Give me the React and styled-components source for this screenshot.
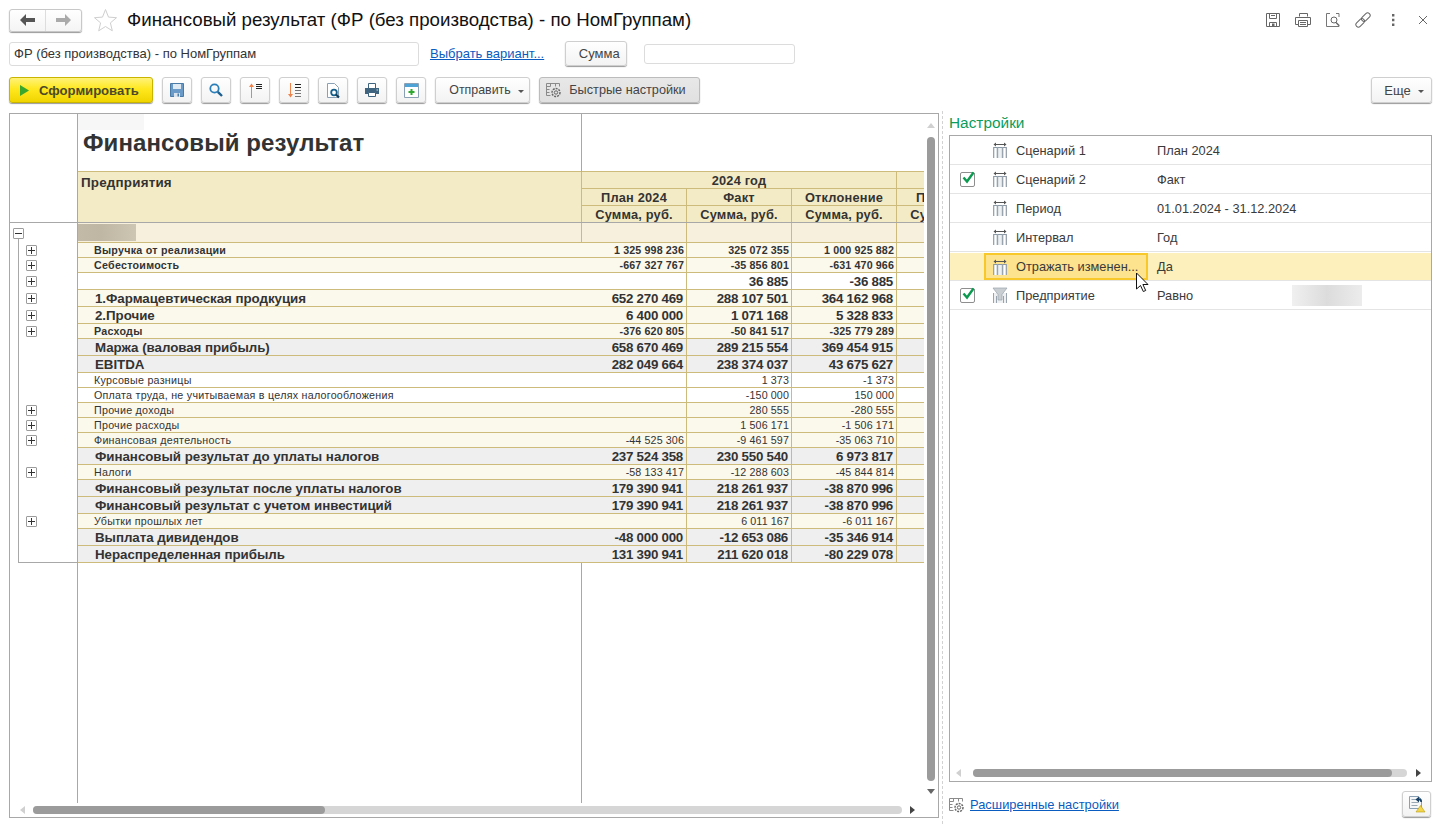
import styled, { createGlobalStyle } from "styled-components";

const GlobalStyle = createGlobalStyle`
  html, body {
    margin: 0;
    height: 826px;
    overflow: hidden;
    background: #fff;
    font-family: "Liberation Sans", Arial, sans-serif;
    color: #333;
  }
  * { box-sizing: border-box; }
`;

const Page = styled.div`
  width: 1443px;
  height: 826px;
  padding-top: 8px;
  position: relative;
`;

/* top bar */
const TopBar = styled.header`
  display: flex;
  align-items: center;
  height: 24px;
  padding-left: 9px;
  padding-right: 12px;
`;
const NavGroup = styled.div`
  display: flex;
  width: 73px;
  height: 23px;
  border: 1px solid #c8c8c8;
  border-radius: 3px;
  box-shadow: 0 1px 1px #999;
  background: linear-gradient(#fff, #f4f4f4);
`;
const NavBtn = styled.div`
  flex: 1;
  display: flex;
  align-items: center;
  justify-content: center;
  & + & { border-left: 1px solid #ddd; }
`;
const Star = styled.div`
  margin-left: 11px;
  width: 25px;
  height: 24px;
`;
const PageTitle = styled.h1`
  margin: 0 0 0 9px;
  font-size: 18.7px;
  font-weight: 400;
  color: #111;
  white-space: nowrap;
`;
const TopIcons = styled.div`
  margin-left: auto;
  display: flex;
  align-items: center;
  gap: 14px;
`;
const TopIcon = styled.div`
  width: 16px;
  height: 16px;
  display: flex;
`;

/* variant row */
const VariantRow = styled.div`
  display: flex;
  align-items: center;
  height: 25px;
  margin-top: 9px;
  padding-left: 9px;
`;
const TextField = styled.div`
  width: ${(p) => p.$w}px;
  height: ${(p) => p.$h}px;
  margin-left: ${(p) => p.$ml || 0}px;
  border: 1px solid #dcdcdc;
  border-radius: 3px;
  background: #fff;
  font-size: 13px;
  line-height: ${(p) => p.$h - 2}px;
  padding-left: 4px;
  color: #333;
`;
const Link = styled.a`
  color: #0b5cc0;
  text-decoration: underline;
  font-size: ${(p) => p.$size || 13}px;
  margin-left: ${(p) => p.$ml || 0}px;
  white-space: nowrap;
`;
const Button = styled.div`
  display: flex;
  align-items: center;
  justify-content: center;
  flex: none;
  gap: 7px;
  width: ${(p) => p.$w}px;
  height: ${(p) => p.$h || 26}px;
  margin-left: ${(p) => p.$ml || 0}px;
  padding-left: ${(p) => p.$pl || 0}px;
  padding-right: ${(p) => p.$pr || 0}px;
  border: 1px solid ${(p) => (p.$pressed ? "#bcbcbc" : "#cfcfcf")};
  border-radius: 3px;
  background: ${(p) =>
    p.$pressed ? "linear-gradient(#e8e8e8, #e0e0e0)" : "linear-gradient(#fff, #f3f3f3)"};
  box-shadow: 0 1px 1px #9a9a9a;
  font-size: ${(p) => p.$fs || 13}px;
  color: #444;
  white-space: nowrap;
`;
const Caret = styled.span`
  width: 0;
  height: 0;
  margin-top: 2px;
  border-left: 3px solid transparent;
  border-right: 3px solid transparent;
  border-top: 3px solid #555;
`;

/* toolbar */
const Toolbar = styled.div`
  display: flex;
  align-items: center;
  height: 26px;
  margin-top: 11px;
  padding-left: 9px;
  padding-right: 11px;
  gap: 9px;
`;
const GenerateBtn = styled.div`
  display: flex;
  align-items: center;
  gap: 10px;
  width: 144px;
  height: 26px;
  padding-left: 10px;
  border: 1px solid #c9b400;
  border-radius: 3px;
  background: linear-gradient(#fff27a, #ffe81f 45%, #f0d400);
  box-shadow: 0 1px 1px #9a9a9a;
  font-size: 13.1px;
  font-weight: 700;
  color: #4a4a2a;
`;
const ToolbarEnd = styled.div`
  margin-left: auto;
`;

/* main */
const Main = styled.main`
  display: flex;
  margin-top: 10px;
  padding-left: 9px;
`;
const ReportPanel = styled.section`
  width: 930px;
  height: 705px;
  flex: none;
  display: flex;
  flex-direction: column;
  border: 1px solid #a8a8a8;
`;
const ReportBody = styled.div`
  display: flex;
  height: 689px;
`;
const Viewport = styled.div`
  width: 914px;
  overflow: hidden;
  flex: none;
`;
const Row = styled.div`
  display: flex;
  height: ${(p) => p.$h}px;
  width: 1100px;
`;
const TreeCell = styled.div`
  position: relative;
  width: 68px;
  flex: none;
  border-right: 1px solid #a8a8a8;
  background: ${(p) =>
    p.$line
      ? "linear-gradient(#a8a8a8, #a8a8a8) 8px 0 / 1px 100% no-repeat"
      : "none"};
`;
const TreeBottom = styled.div`
  position: absolute;
  left: 8px;
  right: 0;
  bottom: 0;
  height: 1px;
  background: #a8a8a8;
`;
const TreeLineStub = styled.div`
  position: absolute;
  left: 8px;
  top: 16px;
  bottom: 0;
  width: 1px;
  background: #a8a8a8;
`;
const Toggle = styled.div`
  position: absolute;
  left: ${(p) => p.$x}px;
  top: ${(p) => p.$y}px;
  width: 11px;
  height: 11px;
  border: 1px solid #9c9c9c;
  border-radius: 1px;
  background: #fff;
  &::before {
    content: "";
    position: absolute;
    left: 1px;
    right: 1px;
    top: 4px;
    height: 1px;
    background: #333;
  }
  &::after {
    content: "";
    display: ${(p) => (p.$open ? "none" : "block")};
    position: absolute;
    top: 1px;
    bottom: 1px;
    left: 4px;
    width: 1px;
    background: #333;
  }
`;
const tones = {
  white: "#fff",
  light: "#fbf8ec",
  grey: "#efefef",
  group: "#f6f0dc",
  head: "#f3ebc5",
};
const LabelCell = styled.div`
  width: ${(p) => p.$w || 504}px;
  flex: none;
  display: flex;
  align-items: center;
  padding-left: ${(p) => p.$pad ?? (p.$big ? 17 : 16)}px;
  background: ${(p) => tones[p.$tone] || "#fff"};
  border-bottom: 1px solid #cdbb7c;
  font-size: ${(p) => (p.$big ? 13.33 : 10.7)}px;
  font-weight: ${(p) => (p.$bold ? 700 : 400)};
  white-space: nowrap;
  letter-spacing: ${(p) => (p.$big ? -0.04 : 0.26)}px;
`;
const NumCell = styled.div`
  width: ${(p) => p.$w || 105}px;
  flex: none;
  display: flex;
  align-items: center;
  justify-content: flex-end;
  padding-right: ${(p) => (p.$big ? 3 : 2)}px;
  background: ${(p) => tones[p.$tone] || "#fff"};
  border-bottom: 1px solid #cdbb7c;
  border-right: 1px solid #cdbb7c;
  border-left: ${(p) => (p.$first ? "1px solid #cdbb7c" : "none")};
  font-size: ${(p) => (p.$big ? 13.33 : 10.7)}px;
  font-weight: ${(p) => (p.$bold ? 700 : 400)};
  letter-spacing: ${(p) => (p.$big ? -0.25 : 0.12)}px;
  white-space: nowrap;
`;
const BlurBox = styled.div`
  width: 58px;
  height: 17px;
  background: linear-gradient(90deg, #c2baa6, #bfb7a3 40%, #cdc6b3);
`;
const TitleCell = styled.div`
  position: relative;
  width: 504px;
  flex: none;
  padding-left: 5px;
  padding-top: 15px;
  border-bottom: 1px solid #cdbb7c;
  border-right: 1px solid #a8a8a8;
  font-size: 24px;
  font-weight: 700;
  letter-spacing: 0.1px;
  white-space: nowrap;
  &::before {
    content: "";
    position: absolute;
    left: 0;
    top: 0;
    width: 66px;
    height: 16px;
    background: #f7f7f7;
  }
`;
const TitleRest = styled.div`
  width: 400px;
  border-bottom: 1px solid #cdbb7c;
`;
const HeaderRow = styled.div`
  display: flex;
  height: 51px;
  width: 1100px;
  border-bottom: 1px solid #a8a8a8;
`;
const HeaderLabel = styled.div`
  width: 503px;
  flex: none;
  padding: 3px 0 0 3px;
  background: ${tones.head};
  font-size: 13.4px;
  font-weight: 700;
  letter-spacing: 0.2px;
`;
const HeaderGroup = styled.div`
  width: ${(p) => p.$w}px;
  flex: none;
  display: flex;
  flex-direction: column;
`;
const HeadLine = styled.div`
  display: flex;
  height: ${(p) => p.$h}px;
`;
const HeadCell = styled.div`
  width: ${(p) => p.$w || 105}px;
  flex: none;
  display: flex;
  align-items: center;
  justify-content: center;
  background: ${tones.head};
  border-right: 1px solid #cdbb7c;
  border-left: ${(p) => (p.$first ? "1px solid #cdbb7c" : "none")};
  border-bottom: ${(p) => (p.$last ? "none" : "1px solid #cdbb7c")};
  font-size: 12.8px;
  font-weight: 700;
  letter-spacing: 0.2px;
  white-space: nowrap;
`;
const EmptyLabel = styled.div`
  width: 504px;
  flex: none;
  border-right: 1px solid #a8a8a8;
`;
const VScroll = styled.div`
  flex: none;
  width: 12px;
  margin-left: 1px;
  display: flex;
  flex-direction: column;
  align-items: center;
  padding-top: 9px;
`;
const VThumb = styled.div`
  width: 8px;
  height: 644px;
  margin-top: 9px;
  margin-bottom: 8px;
  border-radius: 4px;
  background: #9b9b9b;
`;
const Arrow = styled.span`
  width: 0;
  height: 0;
  flex: none;
  ${(p) =>
    p.$dir === "up" &&
    `border-left:4px solid transparent;border-right:4px solid transparent;border-bottom:5px solid ${p.$c};`}
  ${(p) =>
    p.$dir === "down" &&
    `border-left:4px solid transparent;border-right:4px solid transparent;border-top:5px solid ${p.$c};`}
  ${(p) =>
    p.$dir === "left" &&
    `border-top:4px solid transparent;border-bottom:4px solid transparent;border-right:5px solid ${p.$c};`}
  ${(p) =>
    p.$dir === "right" &&
    `border-top:4px solid transparent;border-bottom:4px solid transparent;border-left:5px solid ${p.$c};`}
`;
const HScroll = styled.div`
  display: flex;
  align-items: center;
  height: ${(p) => p.$h || 14}px;
  padding-left: ${(p) => p.$pl}px;
  padding-right: ${(p) => p.$pr}px;
`;
const HTrack = styled.div`
  flex: 1;
  height: 8px;
  margin-left: ${(p) => p.$ml}px;
  margin-right: ${(p) => p.$mr}px;
  border-radius: 4px;
  background: #d6d6d6;
`;
const HThumb = styled.div`
  height: 8px;
  width: ${(p) => p.$w}px;
  border-radius: 4px;
  background: #9b9b9b;
`;

const Divider = styled.div`
  width: 1px;
  height: 713px;
  flex: none;
  margin-left: 3px;
  margin-top: -2px;
  border-left: 1px dashed #d2d2d2;
`;

/* settings */
const SettingsPanel = styled.aside`
  width: 483px;
  margin-left: 6px;
  flex: none;
  margin-top: -1px;
  display: flex;
  flex-direction: column;
`;
const SettingsTitle = styled.div`
  height: 23px;
  padding-top: 1px;
  font-size: 15.4px;
  line-height: 19px;
  color: #0a9d5c;
`;
const SettingsBox = styled.div`
  height: 647px;
  border: 1px solid #a8a8a8;
  width: 483px;
  display: flex;
  flex-direction: column;
`;
const SettingsRows = styled.div`
  flex: 1;
`;
const SRow = styled.div`
  display: flex;
  align-items: center;
  height: 29px;
  border-bottom: 1px solid #e4e4e4;
  font-size: 12.8px;
  color: #3a3a3a;
  background: ${(p) => (p.$active ? "linear-gradient(#fff 0, #fff 1px, #fdf0bc 1px)" : "none")};
`;
const CheckCell = styled.div`
  width: 34px;
  flex: none;
  padding-left: 10px;
  display: flex;
`;
const CheckBox = styled.div`
  width: 15px;
  height: 15px;
  border: 1px solid #8e8e8e;
  border-radius: 2px;
  background: #fff;
  position: relative;
`;
const CheckMark = styled.svg`
  position: absolute;
  left: 0;
  top: -3px;
`;
const NameCell = styled.div`
  width: 164px;
  height: 27px;
  flex: none;
  display: flex;
  align-items: center;
  gap: 8px;
  padding-left: 6px;
  white-space: nowrap;
  border: 2px solid ${(p) => (p.$active ? "#f8c82a" : "transparent")};
  background: ${(p) => (p.$active ? "#fde38e" : "none")};
  margin-top: ${(p) => (p.$active ? 1 : 0)}px;
`;
const ValueCell = styled.div`
  margin-left: 9px;
  width: 135px;
  flex: none;
  white-space: nowrap;
`;
const SettingBlur = styled.div`
  width: 70px;
  height: 21px;
  flex: none;
  background: linear-gradient(90deg, #f0f0f0, #dcdcdc 50%, #ececec);
`;
const FooterRow = styled.div`
  display: flex;
  align-items: center;
  height: 30px;
  margin-top: 7px;
`;
const FooterIcon = styled.div`
  width: 16px;
  height: 16px;
  margin-right: 5px;
  margin-top: 2px;
`;
const FooterEnd = styled.div`
  margin-left: auto;
  margin-right: 1px;
`;
const Cursor = styled.svg`
  position: absolute;
  left: 1135px;
  top: 272px;
`;

/* icons */
const BackIcon = ({ c }) => (
  <svg width="15" height="12" viewBox="0 0 15 12">
    <path d="M6 0 0 6l6 6V8h9V4H6z" fill={c} />
  </svg>
);
const ForwardIcon = ({ c }) => (
  <svg width="15" height="12" viewBox="0 0 15 12">
    <path d="M9 0l6 6-6 6V8H0V4h9z" fill={c} />
  </svg>
);
const StarIcon = () => (
  <svg width="25" height="24" viewBox="0 0 25 24">
    <path
      d="M12.5 1.5l3 7.6 8 .6-6.1 5.2 1.9 7.9-6.8-4.3-6.8 4.3 1.9-7.9L1.5 9.7l8-.6z"
      fill="#fff"
      stroke="#cfcfcf"
    />
  </svg>
);
const SaveIcon = () => (
  <svg width="16" height="16" viewBox="0 0 16 16">
    <path d="M1.5 1.5h13v13h-13z" fill="#6a9bc8" stroke="#4a7aa6" />
    <path d="M4 2h8v5H4z" fill="#dfe9f2" />
    <path d="M5 11h6v4H5z" fill="#d8e3ee" />
    <path d="M8.5 11.5h1.5v3H8.5z" fill="#4a7aa6" />
  </svg>
);
const SearchIcon = () => (
  <svg width="16" height="16" viewBox="0 0 16 16" fill="none">
    <circle cx="6.5" cy="6.5" r="4.2" stroke="#2b7fb8" strokeWidth="1.8" />
    <path d="M9.8 9.8 14 14" stroke="#1d5f8f" strokeWidth="2.4" />
  </svg>
);
const SortUpIcon = () => (
  <svg width="17" height="17" viewBox="0 0 17 17" fill="none">
    <path d="M4.5 16V3" stroke="#f0824a" />
    <path d="M2 5 4.500 1.500 7 5z" fill="#f0824a" />
    <path d="M9 2.500h6M9 4.500h6M9 6.500h6" stroke="#222" />
  </svg>
);
const SortDownIcon = () => (
  <svg width="17" height="17" viewBox="0 0 17 17" fill="none">
    <path d="M4.500 1v13" stroke="#f0824a" />
    <path d="M2 12 4.500 15.500 7 12z" fill="#f0824a" />
    <path d="M9 2.500h6M9 5.500h6" stroke="#222" />
    <path d="M9 8.500h6M9 11.500h6M9 14.500h6" stroke="#777" />
  </svg>
);
const PreviewIcon = () => (
  <svg width="17" height="17" viewBox="0 0 17 17" fill="none">
    <path d="M2.5 1.5h7l4 4v10h-11z" fill="#fff" stroke="#8aa0b5" />
    <circle cx="9" cy="10.5" r="2.8" stroke="#155f8c" strokeWidth="1.8" />
    <path d="M11 12.5l3 3" stroke="#123f5e" strokeWidth="2.2" />
  </svg>
);
const PrintIcon = () => (
  <svg width="16" height="16" viewBox="0 0 16 16">
    <path d="M4.500 1.500h7v5h-7z" fill="#fff" stroke="#3f6480" />
    <path d="M1 6h14v6H1z" fill="#3f6480" />
    <path d="M4.500 10.500h7v4h-7z" fill="#fff" stroke="#3f6480" />
    <path d="M12.5 7.5h1.5v1h-1.5z" fill="#cfe0ec" />
  </svg>
);
const NewWindowIcon = () => (
  <svg width="15" height="15" viewBox="0 0 15 15">
    <path d="M.5.5h14v14H.5z" fill="#fff" stroke="#8aa0b5" />
    <path d="M1 1h13v3H1z" fill="#4da3d6" />
    <path d="M6.5 6H8.5V8H10.5V10H8.5V12H6.5V10H4.5V8H6.5z" fill="#2fa82f" />
  </svg>
);
const GearGridIcon = () => (
  <svg width="16" height="16" viewBox="0 0 16 16" fill="none">
    <path d="M.5 1.500h13M.5 4.500h4M.5 7.500h3M.5 10.500h3M.5 13.500h4M.5 1.500v12M4.500 1.500v3M9.500 1.500v3M13.500 1.500v3" stroke="#8a8a8a" />
    <circle cx="10" cy="10.5" r="4" stroke="#666" strokeWidth="1.4" strokeDasharray="2 1" />
    <circle cx="10" cy="10.5" r="1.7" stroke="#666" />
  </svg>
);
const PlayIcon = () => (
  <svg width="9" height="11" viewBox="0 0 9 11">
    <path d="M0 0l9 5.5L0 11z" fill="#3aa62c" />
  </svg>
);
const ColumnIcon = () => (
  <svg width="16" height="16" viewBox="0 0 16 16" fill="none">
    <path d="M3 2.500h10" stroke="#555" />
    <path d="M4 .5 1.500 2.500 4 4.500zM12 .5l2.500 2 -2.500 2z" fill="#555" />
    <path d="M1 6a1 1 0 0 1 1-1h12a1 1 0 0 1 1 1v10H1z" fill="#dde2e6" />
    <path d="M1 5.500h14" stroke="#8b98a5" />
    <path d="M1.500 5v11M14.500 5v11M5.500 5v11M10.500 5v11" stroke="#98a3ae" />
    <path d="M3.500 6v10M8 6v10M12.500 6v10" stroke="#fff" />
  </svg>
);
const FilterIcon = () => (
  <svg width="16" height="16" viewBox="0 0 16 16" fill="none">
    <path d="M1 6h14v10H1z" fill="#eef0f2" />
    <path d="M1.500 6v10M14.500 6v10M4.500 9v7M11.500 9v7" stroke="#98a3ae" />
    <path d="M1 1h14L10 7.500V13H6V7.500z" fill="#c9ced3" stroke="#98a3ae" strokeWidth=".7" />
  </svg>
);
const FloppyOutline = () => (
  <svg width="16" height="16" viewBox="0 0 16 16" fill="none">
    <path d="M1.500 1.500h13v13h-13z" stroke="#666" />
    <path d="M4.500 1.500v5h7v-5M6 3.500h4" stroke="#666" />
    <path d="M4.500 14.500v-4h7v4" stroke="#666" />
    <path d="M7 11.500h2.500v3H7z" fill="#666" />
  </svg>
);
const PrinterOutline = () => (
  <svg width="16" height="16" viewBox="0 0 16 16" fill="none">
    <path d="M4.500 4.500v-3h8v3M.5 5.500h15v7h-3M3.500 12.500h-3v-7" stroke="#666" />
    <path d="M3.500 8.500h9v6h-9zM5 10.500h6M5 12.500h6" stroke="#666" />
  </svg>
);
const PreviewOutline = () => (
  <svg width="16" height="16" viewBox="0 0 16 16" fill="none">
    <path d="M5 1.500H1.500v13H14V13M14 5V1.500h-3" stroke="#777" />
    <circle cx="9" cy="8" r="3" stroke="#666" />
    <path d="M11 10.500l3 3" stroke="#666" strokeWidth="1.4" />
  </svg>
);
const LinkOutline = () => (
  <svg width="16" height="16" viewBox="0 0 16 16" fill="none" stroke="#666">
    <g transform="rotate(-45 8 8)">
      <rect x="-1" y="5.500" width="10" height="5" rx="2.500" />
      <rect x="7" y="5.500" width="10" height="5" rx="2.500" />
    </g>
  </svg>
);
const DotsIcon = () => (
  <svg width="16" height="16" viewBox="0 0 16 16">
    <path d="M7 2h2.400v2.400H7zM7 6.800h2.400v2.400H7zM7 11.600h2.400V14H7z" fill="#666" />
  </svg>
);
const CloseIcon = () => (
  <svg width="16" height="16" viewBox="0 0 16 16" fill="none">
    <path d="M4 4l8 8M12 4l-8 8" stroke="#666" />
  </svg>
);
const RestoreIcon = () => (
  <svg width="18" height="18" viewBox="0 0 18 18" fill="none">
    <path d="M1.500 1.500h9l3 3v9h-12z" fill="#f4f6f8" stroke="#8aa0b5" />
    <path d="M3.500 4.500h5M3.500 7.500h7M3.500 10.500h6" stroke="#9aa8b5" />
    <path d="M14 7c0-2.200-1-3.600-3-3.800V1.500L7.500 4.500 11 7.500V5.300c.9.200 1.400.9 1.400 1.700z" fill="#153f66" />
    <path d="M12.500 10.500 8 17h9z" fill="#f5d64a" stroke="#b79a18" strokeWidth=".6" />
  </svg>
);

const bigRow = 17;
const smallRow = 15;

const rows = [
  { h: smallRow, tone: "light", bold: true, box: true, label: "Выручка от реализации", v: ["1 325 998 236", "325 072 355", "1 000 925 882"] },
  { h: smallRow, tone: "light", bold: true, box: true, label: "Себестоимость", v: ["-667 327 767", "-35 856 801", "-631 470 966"] },
  { h: bigRow, tone: "white", box: true, numBig: true, numBold: true, label: "", v: ["", "36 885", "-36 885"] },
  { h: bigRow, tone: "light", big: true, bold: true, box: true, label: "1.Фармацевтическая продкуция", v: ["652 270 469", "288 107 501", "364 162 968"] },
  { h: bigRow, tone: "light", big: true, bold: true, box: true, label: "2.Прочие", v: ["6 400 000", "1 071 168", "5 328 833"] },
  { h: smallRow, tone: "light", bold: true, box: true, label: "Расходы", v: ["-376 620 805", "-50 841 517", "-325 779 289"] },
  { h: bigRow, tone: "grey", big: true, bold: true, label: "Маржа (валовая прибыль)", v: ["658 670 469", "289 215 554", "369 454 915"] },
  { h: bigRow, tone: "grey", big: true, bold: true, label: "EBITDA", v: ["282 049 664", "238 374 037", "43 675 627"] },
  { h: smallRow, tone: "white", label: "Курсовые разницы", v: ["", "1 373", "-1 373"] },
  { h: smallRow, tone: "white", label: "Оплата труда, не учитываемая в целях налогообложения", v: ["", "-150 000", "150 000"] },
  { h: smallRow, tone: "light", box: true, label: "Прочие доходы", v: ["", "280 555", "-280 555"] },
  { h: smallRow, tone: "light", box: true, label: "Прочие расходы", v: ["", "1 506 171", "-1 506 171"] },
  { h: smallRow, tone: "light", box: true, label: "Финансовая деятельность", v: ["-44 525 306", "-9 461 597", "-35 063 710"] },
  { h: bigRow, tone: "grey", big: true, bold: true, label: "Финансовый результат до уплаты налогов", v: ["237 524 358", "230 550 540", "6 973 817"] },
  { h: smallRow, tone: "light", box: true, label: "Налоги", v: ["-58 133 417", "-12 288 603", "-45 844 814"] },
  { h: bigRow, tone: "grey", big: true, bold: true, label: "Финансовый результат после уплаты налогов", v: ["179 390 941", "218 261 937", "-38 870 996"] },
  { h: bigRow, tone: "grey", big: true, bold: true, label: "Финансовый результат с учетом инвестиций", v: ["179 390 941", "218 261 937", "-38 870 996"] },
  { h: smallRow, tone: "light", box: true, label: "Убытки прошлых лет", v: ["", "6 011 167", "-6 011 167"] },
  { h: bigRow, tone: "grey", big: true, bold: true, label: "Выплата дивидендов", v: ["-48 000 000", "-12 653 086", "-35 346 914"] },
  { h: bigRow, tone: "grey", big: true, bold: true, label: "Нераспределенная прибыль", v: ["131 390 941", "211 620 018", "-80 229 078"] },
];

const settings = [
  { name: "Сценарий 1", value: "План 2024" },
  { name: "Сценарий 2", value: "Факт", checked: true },
  { name: "Период", value: "01.01.2024 - 31.12.2024" },
  { name: "Интервал", value: "Год" },
  { name: "Отражать изменен...", value: "Да", active: true },
  { name: "Предприятие", value: "Равно", checked: true, filter: true, blur: true },
];

const ReportRow = ({ row, last }) => (
  <Row $h={row.h}>
    <TreeCell $line>
      {row.box && <Toggle $x={16} $y={Math.floor((row.h - 11) / 2)} />}
      {last && <TreeBottom />}
    </TreeCell>
    <LabelCell $tone={row.tone} $big={row.big} $bold={row.bold}>
      {row.label}
    </LabelCell>
    {row.v.map((value, i) => (
      <NumCell
        key={i}
        $tone={row.tone}
        $big={row.big || row.numBig}
        $bold={row.bold || row.numBold}
      >
        {value}
      </NumCell>
    ))}
    <NumCell $tone={row.tone} />
  </Row>
);

const App = () => {
  return (
    <Page>
      <GlobalStyle />
      <TopBar>
        <NavGroup>
          <NavBtn>
            <BackIcon c="#555" />
          </NavBtn>
          <NavBtn>
            <ForwardIcon c="#aaa" />
          </NavBtn>
        </NavGroup>
        <Star>
          <StarIcon />
        </Star>
        <PageTitle>Финансовый результат (ФР (без производства) - по НомГруппам)</PageTitle>
        <TopIcons>
          <TopIcon><FloppyOutline /></TopIcon>
          <TopIcon><PrinterOutline /></TopIcon>
          <TopIcon><PreviewOutline /></TopIcon>
          <TopIcon><LinkOutline /></TopIcon>
          <TopIcon><DotsIcon /></TopIcon>
          <TopIcon><CloseIcon /></TopIcon>
        </TopIcons>
      </TopBar>

      <VariantRow>
        <TextField $w={410} $h={24}>ФР (без производства) - по НомГруппам</TextField>
        <Link href="#" $ml={11}>Выбрать вариант...</Link>
        <Button $w={62} $h={25} $ml={21} $pl={6}>Сумма</Button>
        <TextField $w={151} $h={20} $ml={17} />
      </VariantRow>

      <Toolbar>
        <GenerateBtn>
          <PlayIcon />
          Сформировать
        </GenerateBtn>
        <Button $w={30}><SaveIcon /></Button>
        <Button $w={30}><SearchIcon /></Button>
        <Button $w={30}><SortUpIcon /></Button>
        <Button $w={30}><SortDownIcon /></Button>
        <Button $w={30}><PreviewIcon /></Button>
        <Button $w={30}><PrintIcon /></Button>
        <Button $w={30}><NewWindowIcon /></Button>
        <Button $w={95} $fs={12.4} $pl={8}>Отправить <Caret /></Button>
        <Button $w={161} $fs={12.7} $pr={7} $pressed><GearGridIcon />Быстрые настройки</Button>
        <ToolbarEnd>
          <Button $w={61} $pl={5}>Еще <Caret /></Button>
        </ToolbarEnd>
      </Toolbar>

      <Main>
        <ReportPanel>
          <ReportBody>
            <Viewport>
              <Row $h={58}>
                <TreeCell />
                <TitleCell>Финансовый результат</TitleCell>
                <TitleRest />
              </Row>
              <HeaderRow>
                <TreeCell />
                <HeaderLabel>Предприятия</HeaderLabel>
                <HeaderGroup $w={316}>
                  <HeadLine $h={17}><HeadCell $w={316} $first>2024 год</HeadCell></HeadLine>
                  <HeadLine $h={17}>
                    <HeadCell $w={106} $first>План 2024</HeadCell>
                    <HeadCell>Факт</HeadCell>
                    <HeadCell>Отклонение</HeadCell>
                  </HeadLine>
                  <HeadLine $h={16}>
                    <HeadCell $w={106} $first $last>Сумма, руб.</HeadCell>
                    <HeadCell $last>Сумма, руб.</HeadCell>
                    <HeadCell $last>Сумма, руб.</HeadCell>
                  </HeadLine>
                </HeaderGroup>
                <HeaderGroup $w={315}>
                  <HeadLine $h={17}><HeadCell $w={315}> </HeadCell></HeadLine>
                  <HeadLine $h={17}><HeadCell>План 2024</HeadCell></HeadLine>
                  <HeadLine $h={16}><HeadCell $last>Сумма, руб.</HeadCell></HeadLine>
                </HeaderGroup>
              </HeaderRow>
              <Row $h={20}>
                <TreeCell>
                  <Toggle $x={3} $y={5} $open />
                  <TreeLineStub />
                </TreeCell>
                <LabelCell $w={503} $tone="group" $pad={0}><BlurBox /></LabelCell>
                <NumCell $w={106} $tone="group" $first />
                <NumCell $tone="group" />
                <NumCell $tone="group" />
                <NumCell $tone="group" />
              </Row>
              {rows.map((row, i) => (
                <ReportRow key={i} row={row} last={i === rows.length - 1} />
              ))}
              <Row $h={240}>
                <TreeCell />
                <EmptyLabel />
              </Row>
            </Viewport>
            <VScroll>
              <Arrow $dir="up" $c="#d0d0d0" />
              <VThumb />
              <Arrow $dir="down" $c="#666" />
            </VScroll>
          </ReportBody>
          <HScroll $pl={10} $pr={23} $h={14}>
            <Arrow $dir="left" $c="#d0d0d0" />
            <HTrack $ml={8} $mr={8}>
              <HThumb $w={292} />
            </HTrack>
            <Arrow $dir="right" $c="#444" />
          </HScroll>
        </ReportPanel>

        <Divider />

        <SettingsPanel>
          <SettingsTitle>Настройки</SettingsTitle>
          <SettingsBox>
            <SettingsRows>
              {settings.map((s) => (
                <SRow key={s.name} $active={s.active}>
                  <CheckCell>
                    {s.checked && (
                      <CheckBox>
                        <CheckMark width="15" height="15" viewBox="0 0 15 15" fill="none">
                          <path d="M2.500 7.500 6 11.500 12.500 2.500" stroke="#0b9a4f" strokeWidth="2.400" />
                        </CheckMark>
                      </CheckBox>
                    )}
                  </CheckCell>
                  <NameCell $active={s.active}>
                    {s.filter ? <FilterIcon /> : <ColumnIcon />}
                    {s.name}
                  </NameCell>
                  <ValueCell>{s.value}</ValueCell>
                  {s.blur && <SettingBlur />}
                </SRow>
              ))}
            </SettingsRows>
            <HScroll $pl={6} $pr={10} $h={16}>
              <Arrow $dir="left" $c="#d0d0d0" />
              <HTrack $ml={12} $mr={9}>
                <HThumb $w={419} />
              </HTrack>
              <Arrow $dir="right" $c="#444" />
            </HScroll>
          </SettingsBox>
          <FooterRow>
            <FooterIcon><GearGridIcon /></FooterIcon>
            <Link href="#" $size={12.9}>Расширенные настройки</Link>
            <FooterEnd>
              <Button $w={29}><RestoreIcon /></Button>
            </FooterEnd>
          </FooterRow>
        </SettingsPanel>
      </Main>

      <Cursor width="16" height="22" viewBox="0 0 16 22">
        <path d="M1.500 1v16l4-3.500 2.800 6 2.400-1-2.800-6H13z" fill="#fff" stroke="#111" />
      </Cursor>
    </Page>
  );
};

export default App;
